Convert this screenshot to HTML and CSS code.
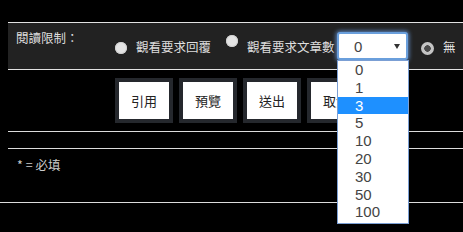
FILE: index.html
```html
<!DOCTYPE html>
<html lang="zh-Hant">
<head>
<meta charset="utf-8">
<title>閱讀限制</title>
<link rel="stylesheet" href="styles.css">
</head>
<body>
<div class="wrap">
  <div class="panel">
    <div class="label">閱讀限制：</div>
    <span class="radio r1"></span>
    <span class="opt t1">觀看要求回覆</span>
    <span class="radio r2"></span>
    <span class="opt t2">觀看要求文章數</span>
    <div class="select">
      <span class="sel-val">0</span>
      <span class="arrow"></span>
      <ul class="dropdown">
        <li>0</li>
        <li>1</li>
        <li class="active">3</li>
        <li>5</li>
        <li>10</li>
        <li>20</li>
        <li>30</li>
        <li>50</li>
        <li>100</li>
      </ul>
    </div>
    <span class="radio checked r3"></span>
    <span class="opt t3">無</span>
  </div>
  <div class="buttons">
    <span class="btn">引用</span>
    <span class="btn">預覽</span>
    <span class="btn">送出</span>
    <span class="btn">取消</span>
  </div>
  <div class="line l1"></div>
  <div class="line l2"></div>
  <div class="note">* = 必填</div>
</div>
<div class="line full"></div>
</body>
</html>
```
FILE: styles.css
```css
html, body {
  margin: 0;
  padding: 0;
  background: #000;
}
body {
  min-height: 232px;
  font-family: "Noto Sans CJK TC", "Noto Sans", sans-serif;
  color: #ddd;
}
.wrap {
  margin: 22px 0 0 8px;
}
.panel {
  position: relative;
  z-index: 2;
  display: flex;
  align-items: center;
  height: 46px;
  background: #222;
  border-top: 1px solid #e2e2e2;
  border-bottom: 1px solid #e2e2e2;
  padding-left: 8px;
  font-size: 12.5px;
  white-space: nowrap;
}
.label {
  align-self: flex-start;
  margin-top: 7px;
  width: 99px;
  flex-shrink: 0;
  line-height: 15px;
}
.radio {
  flex-shrink: 0;
  width: 12px;
  height: 12px;
  border-radius: 50%;
  background: #e4e4e4;
  box-shadow: inset 0 0 0 1px #cfcfcf;
  align-self: flex-start;
}
.r1 { margin-top: 19px; }
.r2 { margin-top: 12px; margin-left: 14px; }
.r3 {
  margin-top: 19px;
  margin-left: 13px;
  width: 13px;
  height: 13px;
  background: radial-gradient(circle, #4a4a4a 0 3px, #c4c4c4 3.5px);
  box-shadow: none;
}
.opt {
  flex-shrink: 0;
  line-height: 15px;
}
.t1 { margin-left: 9px; width: 76px; }
.t2 { margin-left: 9px; width: 90px; }
.t3 { margin-left: 9px; }
.select {
  position: relative;
  flex-shrink: 0;
  box-sizing: border-box;
  width: 71px;
  height: 28px;
  background: #fff;
  border: 2px solid #6a9fdc;
  border-radius: 3px;
  box-shadow: 0 0 4px 1px rgba(110, 160, 230, 0.8);
  display: flex;
  align-items: center;
  font-family: "Liberation Sans", sans-serif;
  font-size: 15px;
  color: #444;
}
.sel-val {
  margin-left: 15px;
}
.arrow {
  margin-left: auto;
  margin-right: 6px;
  width: 0;
  height: 0;
  border-left: 3px solid transparent;
  border-right: 3px solid transparent;
  border-top: 5px solid #333;
}
.dropdown {
  position: absolute;
  z-index: 10;
  left: -2px;
  top: 26px;
  box-sizing: border-box;
  width: 72px;
  height: 164px;
  margin: 0;
  padding: 0 0 2px 0;
  list-style: none;
  background: #fff;
  border: 1px solid #7b9fd4;
  font-family: "Liberation Sans", sans-serif;
  font-size: 15px;
  color: #444;
}
.dropdown li {
  height: 17.8px;
  line-height: 17.8px;
  padding-left: 17px;
}
.dropdown li.active {
  background: #1e90ff;
  color: #fff;
}
.buttons {
  display: flex;
  gap: 6px;
  margin-top: 8px;
  padding-left: 107px;
}
.btn {
  box-sizing: border-box;
  width: 58px;
  height: 45px;
  border: 4px solid #25282d;
  background: #fff;
  color: #222;
  font-size: 13px;
  display: flex;
  align-items: center;
  justify-content: center;
}
.line {
  height: 0;
  border-top: 1px solid #dcdcdc;
}
.l1 { margin-top: 8px; }
.l2 { margin-top: 16px; }
.note {
  margin-top: 7px;
  padding-left: 9px;
  font-size: 12.5px;
  line-height: 18px;
  color: #ccc;
}
.full { margin-top: 28px; }
```
